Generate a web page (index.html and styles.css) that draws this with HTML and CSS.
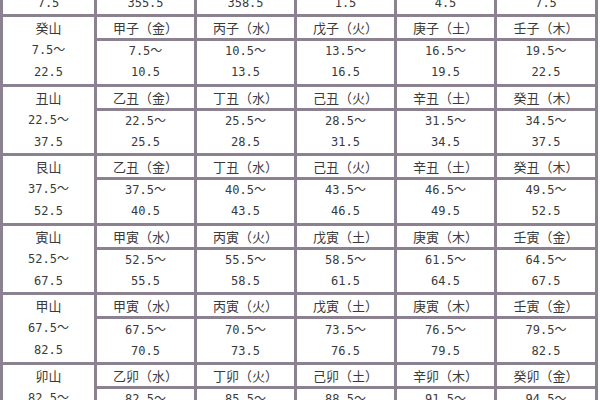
FILE: index.html
```html
<!DOCTYPE html>
<html lang="zh-CN">
<head>
<meta charset="utf-8">
<title>二十四山分金表</title>
<link rel="stylesheet" href="styles.css">
</head>
<body>
<div class="sheet">
  <div class="cell tail"><span class="num">7.5</span></div>
  <div class="cell tail"><span class="num">355.5</span></div>
  <div class="cell tail"><span class="num">358.5</span></div>
  <div class="cell tail"><span class="num">1.5</span></div>
  <div class="cell tail"><span class="num">4.5</span></div>
  <div class="cell tail"><span class="num">7.5</span></div>

  <div class="cell mount"><span>癸山</span><span class="num">7.5～</span><span class="num">22.5</span></div>
  <div class="cell head">甲子（金）</div><div class="cell head">丙子（水）</div><div class="cell head">戊子（火）</div><div class="cell head">庚子（土）</div><div class="cell head">壬子（木）</div>
  <div class="cell range"><span class="num">7.5～</span><span class="num">10.5</span></div>
  <div class="cell range"><span class="num">10.5～</span><span class="num">13.5</span></div>
  <div class="cell range"><span class="num">13.5～</span><span class="num">16.5</span></div>
  <div class="cell range"><span class="num">16.5～</span><span class="num">19.5</span></div>
  <div class="cell range"><span class="num">19.5～</span><span class="num">22.5</span></div>

  <div class="cell mount"><span>丑山</span><span class="num">22.5～</span><span class="num">37.5</span></div>
  <div class="cell head">乙丑（金）</div><div class="cell head">丁丑（水）</div><div class="cell head">己丑（火）</div><div class="cell head">辛丑（土）</div><div class="cell head">癸丑（木）</div>
  <div class="cell range"><span class="num">22.5～</span><span class="num">25.5</span></div>
  <div class="cell range"><span class="num">25.5～</span><span class="num">28.5</span></div>
  <div class="cell range"><span class="num">28.5～</span><span class="num">31.5</span></div>
  <div class="cell range"><span class="num">31.5～</span><span class="num">34.5</span></div>
  <div class="cell range"><span class="num">34.5～</span><span class="num">37.5</span></div>

  <div class="cell mount"><span>艮山</span><span class="num">37.5～</span><span class="num">52.5</span></div>
  <div class="cell head">乙丑（金）</div><div class="cell head">丁丑（水）</div><div class="cell head">己丑（火）</div><div class="cell head">辛丑（土）</div><div class="cell head">癸丑（木）</div>
  <div class="cell range"><span class="num">37.5～</span><span class="num">40.5</span></div>
  <div class="cell range"><span class="num">40.5～</span><span class="num">43.5</span></div>
  <div class="cell range"><span class="num">43.5～</span><span class="num">46.5</span></div>
  <div class="cell range"><span class="num">46.5～</span><span class="num">49.5</span></div>
  <div class="cell range"><span class="num">49.5～</span><span class="num">52.5</span></div>

  <div class="cell mount"><span>寅山</span><span class="num">52.5～</span><span class="num">67.5</span></div>
  <div class="cell head">甲寅（水）</div><div class="cell head">丙寅（火）</div><div class="cell head">戊寅（土）</div><div class="cell head">庚寅（木）</div><div class="cell head">壬寅（金）</div>
  <div class="cell range"><span class="num">52.5～</span><span class="num">55.5</span></div>
  <div class="cell range"><span class="num">55.5～</span><span class="num">58.5</span></div>
  <div class="cell range"><span class="num">58.5～</span><span class="num">61.5</span></div>
  <div class="cell range"><span class="num">61.5～</span><span class="num">64.5</span></div>
  <div class="cell range"><span class="num">64.5～</span><span class="num">67.5</span></div>

  <div class="cell mount"><span>甲山</span><span class="num">67.5～</span><span class="num">82.5</span></div>
  <div class="cell head">甲寅（水）</div><div class="cell head">丙寅（火）</div><div class="cell head">戊寅（土）</div><div class="cell head">庚寅（木）</div><div class="cell head">壬寅（金）</div>
  <div class="cell range"><span class="num">67.5～</span><span class="num">70.5</span></div>
  <div class="cell range"><span class="num">70.5～</span><span class="num">73.5</span></div>
  <div class="cell range"><span class="num">73.5～</span><span class="num">76.5</span></div>
  <div class="cell range"><span class="num">76.5～</span><span class="num">79.5</span></div>
  <div class="cell range"><span class="num">79.5～</span><span class="num">82.5</span></div>

  <div class="cell mount"><span>卯山</span><span class="num">82.5～</span><span class="num">97.5</span></div>
  <div class="cell head">乙卯（水）</div><div class="cell head">丁卯（火）</div><div class="cell head">己卯（土）</div><div class="cell head">辛卯（木）</div><div class="cell head">癸卯（金）</div>
  <div class="cell range"><span class="num">82.5～</span><span class="num">85.5</span></div>
  <div class="cell range"><span class="num">85.5～</span><span class="num">88.5</span></div>
  <div class="cell range"><span class="num">88.5～</span><span class="num">91.5</span></div>
  <div class="cell range"><span class="num">91.5～</span><span class="num">94.5</span></div>
  <div class="cell range"><span class="num">94.5～</span><span class="num">97.5</span></div>
</div>
</body>
</html>
```
FILE: styles.css
```css
html, body {
  margin: 0;
  padding: 0;
  background: #ffffff;
  overflow: hidden;
}

body {
  width: 600px;
  height: 400px;
  font-family: "Noto Sans CJK SC", "Noto Sans", sans-serif;
  color: #3a3a3a;
}

.sheet {
  display: grid;
  grid-template-columns: 91px 97px 97px 97px 97px 98px;
  grid-template-rows: 22px repeat(6, 21px 42.6px);
  gap: 3px;
  padding: 0 3px 3px;
  margin-top: -8px;
  width: 592px;
  background: #8c8190;
}

.cell {
  background: #ffffff;
  display: flex;
  flex-direction: column;
  align-items: center;
  justify-content: flex-start;
  font-size: 13px;
  line-height: 21px;
  white-space: nowrap;
}

.num {
  font-family: "DejaVu Sans Mono", "Noto Sans CJK SC", monospace;
  font-size: 12px;
}

.tail {
  line-height: 22px;
}

.head {
  justify-content: center;
}

.range {
  padding-top: 0.3px;
}

.mount {
  grid-row: span 2;
  line-height: 22px;
}
```
